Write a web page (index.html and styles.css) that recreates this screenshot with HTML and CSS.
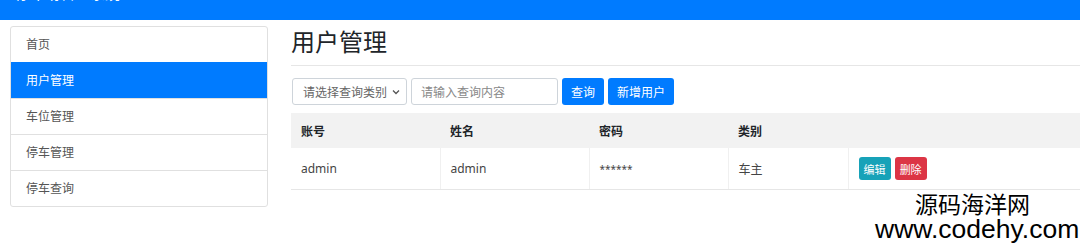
FILE: index.html
```html
<!DOCTYPE html>
<html lang="zh-CN">
<head>
    <meta charset="UTF-8">
    <title>停车场管理系统</title>
    <link rel="stylesheet" href="styles.css">
</head>
<body>
    <!-- 顶部导航 -->
    <div class="navbar">
        <span class="brand">停车场管理系统</span>
        <div class="nav-right">
            <span>admin</span>
            <span>退出</span>
        </div>
    </div>

    <div class="page">
        <!-- 左侧菜单 -->
        <ul class="side-menu">
            <li>首页</li>
            <li class="active">用户管理</li>
            <li>车位管理</li>
            <li>停车管理</li>
            <li>停车查询</li>
        </ul>

        <!-- 用户管理 -->
        <div class="main">
            <h2 class="page-title">用户管理</h2>
            <div class="search-bar">
                <div class="select-box">
                    <span>请选择查询类别</span>
                    <svg width="8" height="6" viewBox="0 0 8 6"><path d="M1 1.5 L4 4.5 L7 1.5" fill="none" stroke="#555" stroke-width="1.3"/></svg>
                </div>
                <div class="text-box">请输入查询内容</div>
                <button class="btn btn-blue">查询</button>
                <button class="btn btn-blue">新增用户</button>
            </div>
            <table class="user-table">
                <thead>
                    <tr>
                        <th class="c1">账号</th>
                        <th class="c2">姓名</th>
                        <th class="c3">密码</th>
                        <th class="c4">类别</th>
                        <th></th>
                    </tr>
                </thead>
                <tbody>
                    <tr>
                        <td>admin</td>
                        <td>admin</td>
                        <td class="stars">******</td>
                        <td>车主</td>
                        <td>
                            <button class="btn-sm btn-teal">编辑</button>
                            <button class="btn-sm btn-red">删除</button>
                        </td>
                    </tr>
                </tbody>
            </table>
        </div>
    </div>

    <!-- 水印 -->
    <div class="watermark">
        <div class="wm-cn">源码海洋网</div>
        <div class="wm-url">www.codehy.com</div>
    </div>
</body>
</html>
```

FILE: styles.css
```css
/* 基础 */
body {
    margin: 0;
    font-family: "Noto Sans", "Noto Sans CJK SC", sans-serif;
    color: #212529;
    background: #fff;
    overflow: hidden;
}
.navbar {
    height: 20px;
    background-color: #007bff;
    overflow: hidden;
    display: flex;
    justify-content: space-between;
    color: #fff;
    font-size: 15px;
}
.brand {
    margin: -17px 0 0 15px;
    line-height: 20px;
}
.nav-right {
    display: flex;
    gap: 50px;
    margin: -17px 18px 0 0;
    line-height: 20px;
    font-size: 13px;
}

.page {
    display: flex;
    align-items: flex-start;
    gap: 23px;
    padding: 6px 0 0 10px;
}

/* 左侧菜单 */
.side-menu {
    list-style: none;
    margin: 0;
    padding: 0;
    width: 256px;
    flex: none;
    border: 1px solid #e0e0e0;
    border-radius: 3px;
    overflow: hidden;
    font-size: 12px;
}
.side-menu li {
    padding: 8px 15px;
    line-height: 19px;
    color: #555;
    border-top: 1px solid #e0e0e0;
}
.side-menu li:first-child {
    border-top: none;
}
.side-menu li.active {
    background-color: #007bff;
    border-color: #007bff;
    color: #fff;
}

/* 主体 */
.main {
    flex: 1;
}
.page-title {
    margin: 0;
    padding: 1px 0 9px;
    font-size: 24px;
    font-weight: 400;
    line-height: 29px;
    border-bottom: 1px solid #e6e6e6;
}
.search-bar {
    display: flex;
    gap: 4px;
    margin-top: 12px;
    margin-left: 1px;
    font-size: 12px;
}
.select-box,
.text-box {
    height: 25px;
    border: 1px solid #ced4da;
    border-radius: 3px;
    display: flex;
    align-items: center;
    color: #666;
    box-sizing: content-box;
}
.select-box {
    width: 97px;
    padding: 0 6px 0 10px;
    justify-content: space-between;
}
.text-box {
    width: 136px;
    padding: 0 0 0 9px;
    color: #888;
}
.btn {
    height: 27px;
    border: none;
    border-radius: 3px;
    padding: 0 9px;
    font-family: inherit;
    font-size: 12px;
    color: #fff;
}
.btn-blue {
    background-color: #007bff;
}

/* 表格 */
.user-table {
    width: 100%;
    margin-top: 8px;
    border-collapse: collapse;
    font-size: 12px;
}
.user-table th {
    background: #f2f2f2;
    text-align: left;
    font-weight: 700;
    height: 35px;
    padding: 0 10px;
}
.user-table td {
    height: 41px;
    padding: 0 10px;
    color: #444;
    border-left: 1px solid #f0f0f0;
    border-bottom: 1px solid #e6e6e6;
}
.user-table td:first-child {
    border-left: none;
}
.c1, .c2 {
    width: 129px;
}
.c3 {
    width: 119px;
}
.c4 {
    width: 100px;
}
.stars {
    font-size: 10px;
}
.btn-sm {
    height: 23px;
    border: none;
    border-radius: 3px;
    padding: 0 5px;
    font-family: inherit;
    font-size: 11px;
    color: #fff;
    margin-right: 1px;
}
.btn-teal {
    background-color: #17a2b8;
}
.btn-red {
    background-color: #dc3545;
}

/* 水印 */
.watermark {
    position: absolute;
    left: 875px;
    top: 190px;
    color: #000;
    font-family: "Noto Sans CJK SC", sans-serif;
}
.wm-cn {
    font-size: 23px;
    line-height: 26px;
    margin-left: 40px;
}
.wm-url {
    font-family: "Liberation Sans", sans-serif;
    font-size: 26.5px;
    line-height: 26px;
}
```
